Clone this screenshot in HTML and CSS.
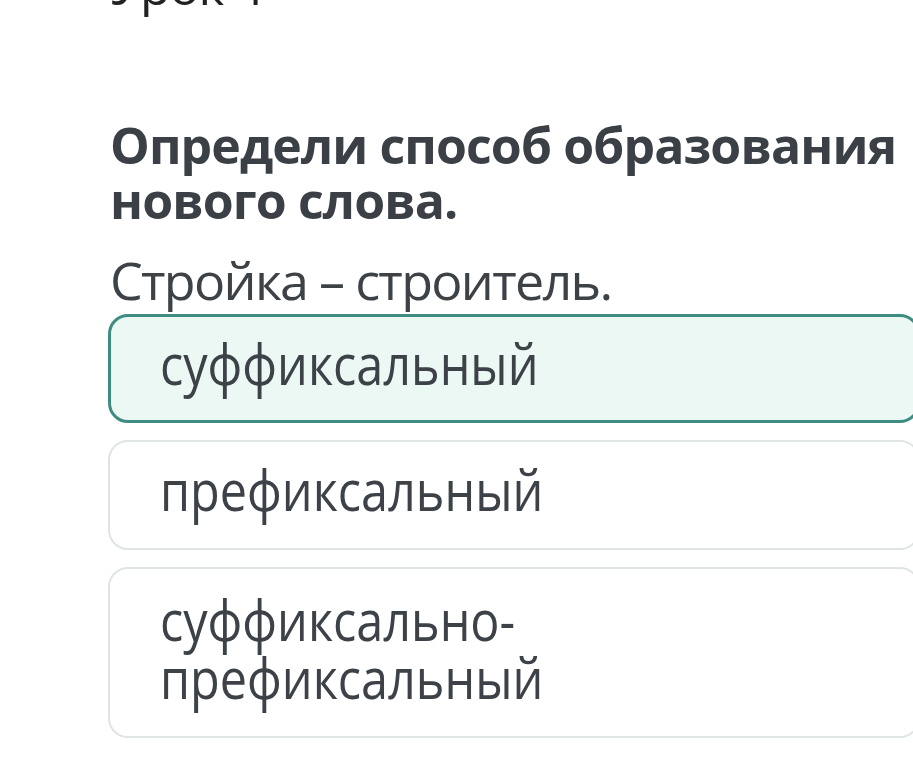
FILE: index.html
```html
<!DOCTYPE html>
<html lang="ru">
<head>
<meta charset="utf-8">
<link rel="stylesheet" href="styles.css">
</head>
<body>
<main class="page">
  <div class="lesson">Урок 4</div>
  <h1 class="question">Определи способ образования нового слова.</h1>
  <p class="prompt">Стройка – строитель.</p>
  <div class="options">
    <div class="option selected"><span class="label">суффиксальный</span></div>
    <div class="option"><span class="label">префиксальный</span></div>
    <div class="option multi"><span class="label">суффиксально-<br>префиксальный</span></div>
  </div>
</main>
</body>
</html>
```
FILE: styles.css
```css
html, body {
  margin: 0;
  padding: 0;
  background: #ffffff;
  overflow: hidden;
}
body {
  width: 913px;
  height: 766px;
  font-family: "Open Sans", "Noto Sans", sans-serif;
}
.page {
  padding-left: 108px;
  width: 812px;
}
.lesson {
  margin-top: -41px;
  margin-left: 2px;
  font-size: 50px;
  line-height: 55px;
  color: #222;
  letter-spacing: -1px;
}
.question {
  margin: 104px 0 0 2px;
  font-size: 50px;
  line-height: 55px;
  font-weight: 700;
  color: #3b4046;
  width: 803px;
  letter-spacing: -0.9px;
}
.prompt {
  margin: 22px 0 0 2px;
  font-size: 52px;
  line-height: 60px;
  color: #3d4247;
  letter-spacing: -1.7px;
}
.options {
  display: flex;
  flex-direction: column;
  gap: 17px;
  margin-top: 4px;
}
.option {
  border: 2px solid #dfe4e4;
  border-radius: 20px;
  padding: 19px 50px 30px;
  font-size: 56px;
  line-height: 57px;
  color: #3c4247;
  background: #fff;
}
.option.selected {
  border: 3px solid #3f8c83;
  background: #ecf8f3;
  padding: 18px 49px 28px;
}
.option.multi {
  padding-top: 22px;
  line-height: 57.5px;
}
.label {
  display: inline-block;
  transform: scaleX(0.867);
  transform-origin: left center;
  white-space: nowrap;
}
```
